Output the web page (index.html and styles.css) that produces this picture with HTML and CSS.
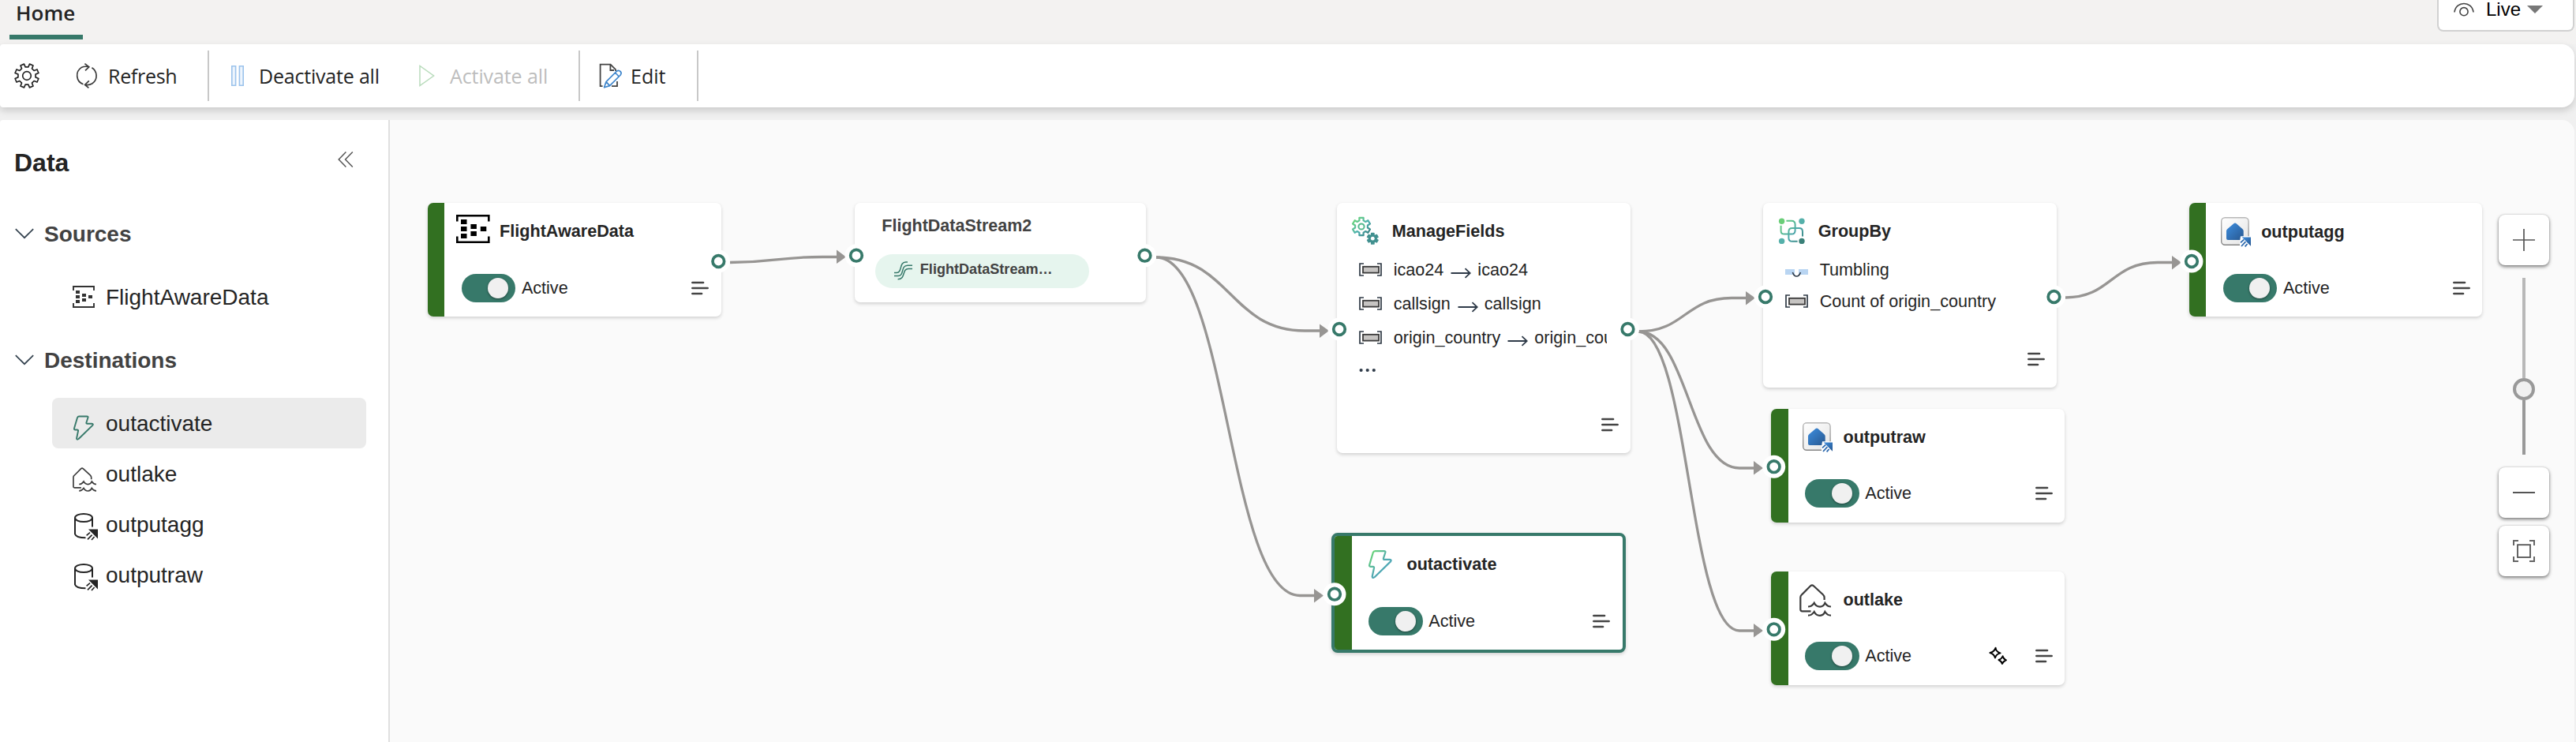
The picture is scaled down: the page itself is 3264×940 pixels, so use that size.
FILE: index.html
```html
<!DOCTYPE html>
<html lang="en">
<head>
<meta charset="utf-8">
<title>Eventstream</title>
<link rel="stylesheet" href="styles.css">
</head>
<body>
<svg class="defs" width="0" height="0" aria-hidden="true">
  <defs>
    <linearGradient id="teal" x1="0" y1="0" x2="1" y2="1"><stop offset="0" stop-color="#6fdc6f"/><stop offset=".55" stop-color="#4fb0b0"/><stop offset="1" stop-color="#347878"/></linearGradient>
    <linearGradient id="tealBox" gradientUnits="userSpaceOnUse" x1="0" y1="0" x2="34" y2="34"><stop offset="0" stop-color="#6fdc6f"/><stop offset=".55" stop-color="#4ba6aa"/><stop offset="1" stop-color="#357870"/></linearGradient>
    <linearGradient id="boltFill" x1="0" y1="0" x2=".8" y2=".8"><stop offset="0" stop-color="#6fdc6f"/><stop offset=".65" stop-color="#4fa8b0"/><stop offset="1" stop-color="#4fa8b8"/></linearGradient>
    <linearGradient id="blue" x1="0" y1="0" x2="1" y2="1"><stop offset="0" stop-color="#3d8ee0"/><stop offset="1" stop-color="#27578f"/></linearGradient>
    <linearGradient id="paper" x1="0" y1="0" x2="1" y2="1"><stop offset="0" stop-color="#fff"/><stop offset="1" stop-color="#e4e4e4"/></linearGradient>
    <linearGradient id="paperEdge" x1="0" y1="0" x2="0" y2="1"><stop offset="0" stop-color="#b8b8b8"/><stop offset="1" stop-color="#858585"/></linearGradient>
    <symbol id="menu" viewBox="0 0 22 18"><path d="M1.4 2H15M1.4 9H20.6M1.4 16H13" fill="none" stroke="#444" stroke-width="2.7" stroke-linecap="round"/></symbol>
    <symbol id="bolt" viewBox="0 0 30 36"><path d="M8.4 1.2H19.8Q21.9 1.2 21.3 3L19 10.2Q18.5 11.9 20.3 11.9H27Q29.6 12.2 28 14.4L7.6 34.2Q5 36 4.7 33.4L7 22.4Q7.2 20.8 5.6 20.8H2.6Q.7 20.6 1.2 18.6L5.8 3Q6.5 1.2 8.4 1.2Z" fill="none" stroke-width="2.2" stroke-linejoin="round"/></symbol>
    <symbol id="lake" viewBox="0 0 40 41"><path d="M14.5 34.3H3.6Q1.3 34.3 1.3 32V16.8Q1.3 15 2.6 13.8L14 2.3Q16 .6 18 2.3L29.6 13Q31.6 15 31.6 16.8V20M11 28.5Q15.5 28.5 18.7 23.8Q21 28.6 26 28.6Q30.6 28.4 32.4 23.8Q35.5 28.5 40 28.5M11 39.7Q15.5 39.7 18.7 35Q21 39.8 26 39.8Q30.6 39.6 32.4 35Q35.5 39.7 40 39.7" fill="none" stroke="#3b3b3b" stroke-width="2.2"/></symbol>
    <symbol id="db" viewBox="0 0 30 35"><g fill="none" stroke="#242424" stroke-width="2"><ellipse cx="12" cy="6" rx="11" ry="5"/><path d="M1 6V26.5Q2.4 31.3 14.5 31.3M23 6V17.5"/><path d="M15.6 28.4L20 24.6M17 33.4L22.6 27.6M22 34L25.6 30" stroke-width="1.7"/></g><path d="M18 20.6H30V32.5Z" fill="#242424"/></symbol>
    <symbol id="house" viewBox="0 0 39 39"><rect x=".7" y=".7" width="34.4" height="34.6" rx="4.5" fill="url(#paper)" stroke="url(#paperEdge)" stroke-width="1.4"/><path d="M7 17.5Q7 16 8.4 14.9L16.3 8.2Q18 7 19.7 8.2L27.3 14.9Q28.7 16 28.7 17.5V27Q28.7 29 26.7 29H9Q7 29 7 27Z" fill="url(#blue)"/><path d="M25 24.2H38.5V38H24V31Z" fill="#fff"/><path d="M26.6 25.4H38V36.8Z" fill="url(#blue)"/><path d="M24.6 33L29.6 28.4M25.6 37L31.6 31M30.4 37.4L33.4 34" stroke="#fff" stroke-width="4"/><path d="M25 32.4L29.4 28.4M26 37L31.4 31.2M30.6 37.4L33.6 34" stroke="#2c69ae" stroke-width="1.8"/></symbol>
    <symbol id="field" viewBox="0 0 29 17"><path d="M6 1H1V16H6M23 1H28V16H23" fill="none" stroke="#2f3a45" stroke-width="1.7"/><rect x="5" y="4.8" width="20" height="7.8" fill="#c6c4c2" stroke="#3a3a3a" stroke-width="1.8"/></symbol>
    <symbol id="arrow" viewBox="0 0 26 14"><path d="M.5 7H24.5M18.5 1.2L24.7 7L18.5 12.8" fill="none" stroke="#2f3b49" stroke-width="1.8"/></symbol>
    <symbol id="chevron" viewBox="0 0 24 14"><path d="M.8 1.2L12 12.2L23.2 1.2" fill="none" stroke="#34424f" stroke-width="1.7"/></symbol>
  </defs>
</svg>

<header class="tabs">
  <div class="tab">Home</div>
  <div class="live">
    <svg class="eye" viewBox="0 0 26 18"><path d="M1 12.5C3 -2.2 23 -2.2 25 12.5" fill="none" stroke="#444" stroke-width="1.6"/><circle cx="13" cy="11.7" r="5.1" fill="none" stroke="#444" stroke-width="1.6"/></svg>
    <span class="live-text">Live</span>
    <svg class="caret" viewBox="0 0 20 10"><path d="M0 0H20L10 10Z" fill="#777"/></svg>
  </div>
</header>

<nav class="toolbar">
  <div class="tool tool-gear">
    <svg width="32" height="32" viewBox="-16 -16 32 32"><path d="M11.05 1.85L14.9 3.5L13 8L9.1 6.5L6.5 9.1L8 13L3.5 14.9L1.85 11.05H-1.85L-3.5 14.9L-8 13L-6.5 9.1L-9.1 6.5L-13 8L-14.9 3.5L-11.05 1.85V-1.85L-14.9 -3.5L-13 -8L-9.1 -6.5L-6.5 -9.1L-8 -13L-3.5 -14.9L-1.85 -11.05H1.85L3.5 -14.9L8 -13L6.5 -9.1L9.1 -6.5L13 -8L14.9 -3.5L11.05 -1.85Z" fill="none" stroke="#242424" stroke-width="1.7" stroke-linejoin="round"/><circle r="5.3" fill="none" stroke="#242424" stroke-width="1.7"/></svg>
  </div>
  <div class="tool tool-refresh">
    <svg width="26" height="32" viewBox="0 0 26 32"><path d="M8.4 26.8A12 12 0 0 1 6 5.6Q10 3.6 15.4 4.6M10.4 .6L15.8 4.8L11 9.4M19.4 5.8A12 12 0 0 1 20 25.8Q16 28.4 11 27.4M15.8 22.4L10.6 27.4L15.4 31.4" fill="none" stroke="#3b3b3b" stroke-width="1.7"/></svg>
    <span>Refresh</span>
  </div>
  <div class="divider"></div>
  <div class="tool tool-deactivate">
    <svg width="16" height="26" viewBox="0 0 16 26"><path d="M.8 .8H5.6V25.2H.8ZM10.4 .8H15.2V25.2H10.4Z" fill="#eef5fd" stroke="#9cc3ec" stroke-width="1.6"/></svg>
    <span>Deactivate all</span>
  </div>
  <div class="tool tool-activate">
    <svg width="20" height="28" viewBox="0 0 20 28"><path d="M1 1.4V26.6L18.6 14Z" fill="none" stroke="#b9dcbc" stroke-width="1.5"/></svg>
    <span>Activate all</span>
  </div>
  <div class="divider"></div>
  <div class="tool tool-edit">
    <svg width="30" height="32" viewBox="0 0 30 32"><path d="M4.6 29.2H1.6V1.6H14.6L21 8V10M14.4 2V9H19M16 29.2H23V23" fill="none" stroke="#444" stroke-width="1.8"/><path d="M6.6 30.8L9 23.6L22.6 10Q25 8.4 27.2 10.6Q29 12.8 27.2 15L13.6 28.6ZM9 23.6L13.6 28.6M20.6 12L25.2 17" fill="#fff" stroke="#3f86cc" stroke-width="1.7" stroke-linejoin="round"/></svg>
    <span>Edit</span>
  </div>
  <div class="divider"></div>
</nav>

<main class="workspace">
  <aside class="sidebar">
    <div class="side-head">
      <h1>Data</h1>
      <svg width="20" height="20" viewBox="0 0 20 20"><path d="M10.4 .6L1.2 10L10.4 19.4M18.8 .6L9.6 10L18.8 19.4" fill="none" stroke="#555" stroke-width="1.5"/></svg>
    </div>
    <div class="group"><svg width="24" height="14"><use href="#chevron"/></svg><span class="label">Sources</span></div>
    <div class="item item-source">
      <span class="item-icon"><svg width="28" height="28" viewBox="0 0 28 28"><path d="M1 6V1H27V6M1 22V27H27V22" fill="none" stroke="#333" stroke-width="1.9"/><path d="M4 6h5v4H4zM4 12h5v4H4zM4 18h5v4H4zM12 10h5v4h-5zM12 16h5v4h-5zM20 12h5v4h-5z" fill="#333"/></svg></span>
      <span class="label">FlightAwareData</span>
    </div>
    <div class="group group-dest"><svg width="24" height="14"><use href="#chevron"/></svg><span class="label">Destinations</span></div>
    <div class="item item-selected"><span class="item-icon icon-bolt"><svg width="26" height="32" stroke="#37796a"><use href="#bolt"/></svg></span><span class="label">outactivate</span></div>
    <div class="item"><span class="item-icon icon-lake"><svg width="30" height="31"><use href="#lake"/></svg></span><span class="label">outlake</span></div>
    <div class="item"><span class="item-icon icon-db"><svg width="30" height="35"><use href="#db"/></svg></span><span class="label">outputagg</span></div>
    <div class="item"><span class="item-icon icon-db"><svg width="30" height="35"><use href="#db"/></svg></span><span class="label">outputraw</span></div>
  </aside>

  <section class="canvas">
    <article class="node node-source">
      <div class="bar"></div>
      <div class="body">
        <div class="node-head"><span class="node-icon"><svg class="stream-src" width="43" height="36" viewBox="0 0 43 36"><path d="M1.3 8.6V1.3H41.3V8.6M1.3 27.4V34.7H41.3V27.4" fill="none" stroke="#000" stroke-width="2.6"/><path d="M6 6h7.5v6H6zM6 15h7.5v6H6zM6 24h7.5v6H6zM18.4 12h7.5v6h-7.5zM18.4 21h7.5v6h-7.5zM30.8 15h7.5v6h-7.5z"/></svg></span><span class="title">FlightAwareData</span></div>
        <div class="node-foot"><span class="toggle"><i></i></span><span class="state">Active</span><svg class="menu" width="22" height="18"><use href="#menu"/></svg></div>
      </div>
    </article>

    <article class="node node-stream">
      <div class="stream-title">FlightDataStream2</div>
      <div class="pill"><svg width="23" height="24" viewBox="0 0 23 24"><path d="M0 14.6H3C10.6 14.6 6 1 14.6 1H17M0 18.6H5C13 18.6 8 5.2 17 5.2H23M4.6 22.8C15 22.8 9.6 9.4 18 9.4H23" fill="none" stroke="#37796a" stroke-width="1.5"/></svg><span>FlightDataStream…</span></div>
    </article>

    <article class="node node-manage">
      <div class="op">
        <div class="op-head"><svg width="36" height="38" viewBox="-13 -13 36 38"><path d="M2.6 7.6L2.6 11.2H-2.6L-2.6 7.6L-5.3 6L-8.4 7.8L-11 3.4L-7.9 1.5V-1.5L-11 -3.4L-8.4 -7.8L-5.3 -6L-2.6 -7.6V-11.2H2.6V-7.6L5.3 -6L8.4 -7.8L11 -3.4L7.9 -1.5V1.5L11 3.4L8.4 7.8L5.3 6Z" fill="none" stroke="url(#teal)" stroke-width="2.2" stroke-linejoin="round"/><circle r="3.6" fill="none" stroke="#52b88c" stroke-width="2"/><g transform="translate(14.3 15.2) scale(.6)"><path d="M2.6 7.6L2.6 11.2H-2.6L-2.6 7.6L-5.3 6L-8.4 7.8L-11 3.4L-7.9 1.5V-1.5L-11 -3.4L-8.4 -7.8L-5.3 -6L-2.6 -7.6V-11.2H2.6V-7.6L5.3 -6L8.4 -7.8L11 -3.4L7.9 -1.5V1.5L11 3.4L8.4 7.8L5.3 6Z" fill="#41908f" stroke="#41908f" stroke-width="2.8" stroke-linejoin="round"/><circle r="4" fill="#fff"/></g></svg><span class="title">ManageFields</span></div>
        <div class="field"><svg width="29" height="17"><use href="#field"/></svg><span>icao24</span><svg class="arrow" width="26" height="14"><use href="#arrow"/></svg><span>icao24</span></div>
        <div class="field"><svg width="29" height="17"><use href="#field"/></svg><span>callsign</span><svg class="arrow" width="26" height="14"><use href="#arrow"/></svg><span>callsign</span></div>
        <div class="field"><svg width="29" height="17"><use href="#field"/></svg><span>origin_country</span><svg class="arrow" width="26" height="14"><use href="#arrow"/></svg><span>origin_country</span></div>
        <svg class="dots" width="22" height="6" viewBox="0 0 22 6" fill="#2f3b49"><circle cx="2.6" cy="3" r="2.1"/><circle cx="10.7" cy="3" r="2.1"/><circle cx="18.8" cy="3" r="2.1"/></svg>
        <svg class="menu op-menu" width="22" height="18"><use href="#menu"/></svg>
      </div>
    </article>

    <article class="node node-group">
      <div class="op">
        <div class="op-head"><svg width="36" height="38" viewBox="-2 -2.4 36 38"><g fill="none" stroke="url(#tealBox)" stroke-width="2"><path d="M9.4 3.4H16Q20.6 3.4 20.6 8V15.6Q20.6 20.2 16 20.2H7Q2.6 20.2 2.6 16V9.4"/><path d="M30 23V17Q30 12.6 25.6 12.6H17Q12.4 12.6 12.4 17V25Q12.4 29.4 17 29.4H23.6"/></g><circle cx="3.6" cy="3.8" r="3.7" fill="#6ace78"/><circle cx="29" cy="3.8" r="3.7" fill="#55b0aa"/><circle cx="3.6" cy="29" r="3.7" fill="#55b0aa"/><circle cx="29" cy="29" r="3.7" fill="#3a8078"/></svg><span class="title">GroupBy</span></div>
        <div class="field window"><svg class="window-icon" width="29" height="17" viewBox="0 0 29 17"><path d="M0 4H12V11H0ZM17 4H29V11H17Z" fill="#b9d5f2"/><path d="M9.4 8Q11 13 14.4 13Q17.8 13 19.4 8" fill="none" stroke="#2f3b49" stroke-width="1.6"/></svg><span>Tumbling</span></div>
        <div class="field count"><svg width="29" height="17"><use href="#field"/></svg><span>Count of origin_country</span></div>
        <svg class="menu op-menu" width="22" height="18"><use href="#menu"/></svg>
      </div>
    </article>

    <article class="node node-agg">
      <div class="bar"></div>
      <div class="body">
        <div class="node-head"><span class="node-icon"><svg class="house" width="39" height="39"><use href="#house"/></svg></span><span class="title">outputagg</span></div>
        <div class="node-foot"><span class="toggle"><i></i></span><span class="state">Active</span><svg class="menu" width="22" height="18"><use href="#menu"/></svg></div>
      </div>
    </article>

    <article class="node node-raw">
      <div class="bar"></div>
      <div class="body">
        <div class="node-head"><span class="node-icon"><svg class="house" width="39" height="39"><use href="#house"/></svg></span><span class="title">outputraw</span></div>
        <div class="node-foot"><span class="toggle"><i></i></span><span class="state">Active</span><svg class="menu" width="22" height="18"><use href="#menu"/></svg></div>
      </div>
    </article>

    <article class="node node-lake">
      <div class="bar"></div>
      <div class="body">
        <div class="node-head"><span class="node-icon"><svg class="lake" width="40" height="41"><use href="#lake"/></svg></span><span class="title">outlake</span></div>
        <div class="node-foot"><span class="toggle"><i></i></span><span class="state">Active</span><svg class="sparkle" width="24" height="24" viewBox="0 0 24 24"><path d="M8.6 1.6Q9 6.6 14.6 8.4Q9.4 9.6 8 14.4Q6.6 9.4 1.4 8Q7 6.6 8.6 1.6ZM17.6 12.2Q18.4 15.6 22 17.4Q18.4 18.4 17 22Q16 18.4 12.4 17Q16.4 15.6 17.6 12.2Z" fill="none" stroke="#000" stroke-width="1.9" stroke-linejoin="round"/></svg><svg class="menu" width="22" height="18"><use href="#menu"/></svg></div>
      </div>
    </article>

    <article class="node node-active selected">
      <div class="bar"></div>
      <div class="body">
        <div class="node-head"><span class="node-icon"><svg width="30" height="36" stroke="url(#boltFill)"><use href="#bolt"/></svg></span><span class="title">outactivate</span></div>
        <div class="node-foot"><span class="toggle"><i></i></span><span class="state">Active</span><svg class="menu" width="22" height="18"><use href="#menu"/></svg></div>
      </div>
    </article>

    <svg class="edges" viewBox="494 152 2768 788">
      <g fill="none" stroke="#979593" stroke-width="3.3">
        <path d="M925 332.5C984 332.5 984 325.5 1042 325.5H1061"/>
        <path d="M1465 326C1559 326 1559 419 1653 419H1673"/>
        <path d="M1465 326C1556 326 1556 754.5 1647 754.5H1666"/>
        <path d="M2076 420C2135 420 2135 377.5 2194 377.5H2213"/>
        <path d="M2076 420C2140 420 2140 593 2204 593H2223"/>
        <path d="M2076 420C2140 420 2140 799 2204 799H2223"/>
        <path d="M2617 377C2675 377 2675 332.5 2734 332.5H2753"/>
      </g>
      <g fill="#979593">
        <path d="M1060 316.5V334L1072 325.5Z"/><path d="M1672 410.5V428L1684 419Z"/><path d="M1665 746V763.5L1677 754.5Z"/>
        <path d="M2212 369V386.5L2224 377.5Z"/><path d="M2222 584V601.5L2234 593Z"/><path d="M2222 790V807.5L2234 799Z"/><path d="M2752 324V341.5L2764 332.5Z"/>
      </g>
      <g fill="#fff">
        <circle cx="910.3" cy="331" r="14.5"/><circle cx="1085" cy="323.7" r="14.5"/><circle cx="1450.5" cy="323.7" r="14.5"/><circle cx="1697" cy="417" r="14.5"/><circle cx="2062.5" cy="417" r="14.5"/><circle cx="1691" cy="752.7" r="14.5"/><circle cx="2237" cy="376" r="14.5"/><circle cx="2602.5" cy="376" r="14.5"/><circle cx="2247.7" cy="591.2" r="14.5"/><circle cx="2247.7" cy="797.3" r="14.5"/><circle cx="2777" cy="331" r="14.5"/>
      </g>
      <g fill="#fff" stroke="#37796a" stroke-width="3.7">
        <circle cx="910.3" cy="331" r="7.3"/><circle cx="1085" cy="323.7" r="7.3"/><circle cx="1450.5" cy="323.7" r="7.3"/><circle cx="1697" cy="417" r="7.3"/><circle cx="2062.5" cy="417" r="7.3"/><circle cx="1691" cy="752.7" r="7.3"/><circle cx="2237" cy="376" r="7.3"/><circle cx="2602.5" cy="376" r="7.3"/><circle cx="2247.7" cy="591.2" r="7.3"/><circle cx="2247.7" cy="797.3" r="7.3"/><circle cx="2777" cy="331" r="7.3"/>
      </g>
    </svg>

    <div class="zoom">
      <button class="zoom-btn"><svg width="28" height="28" viewBox="0 0 28 28"><path d="M0 14H28M14 0V28" stroke="#555" stroke-width="1.7"/></svg></button>
      <div class="track"><i class="upper"></i><i class="thumb"></i><i class="lower"></i></div>
      <button class="zoom-btn"><svg width="28" height="28" viewBox="0 0 28 28"><path d="M0 14H28" stroke="#555" stroke-width="2"/></svg></button>
      <button class="zoom-btn"><svg width="28" height="30" viewBox="0 0 28 30"><path d="M1 8V2H7M21 2H27V8M1 22V28H7M21 28H27V22" fill="none" stroke="#666" stroke-width="2"/><rect x="6" y="7.2" width="16" height="15.8" fill="none" stroke="#555" stroke-width="1.8"/></svg></button>
    </div>
  </section>
</main>
</body>
</html>
```
FILE: styles.css
```css
* { box-sizing: border-box; }

body {
  margin: 0;
  width: 3264px;
  height: 940px;
  overflow: hidden;
  display: flex;
  flex-direction: column;
  background: #f0f0f0;
  color: #242424;
  font-family: "Liberation Sans", Arial, sans-serif;
}

svg { display: block; flex: none; overflow: visible; }
.defs { position: absolute; }
h1 { margin: 0; }

/* Tab strip */
.tabs {
  flex: none;
  height: 56px;
  display: flex;
  justify-content: space-between;
  align-items: flex-start;
  background: #f3f2f1;
  padding: 0 2px 0 12px;
}
.tab {
  width: 93px;
  height: 50px;
  padding-left: 8px;
  border-bottom: 6px solid #37796a;
  font: 600 26px/33px "Open Sans", "Noto Sans", sans-serif;
}
.live {
  width: 174px;
  height: 40px;
  display: flex;
  align-items: flex-start;
  padding-left: 19px;
  background: #fff;
  border: 2px solid #d1d1d1;
  border-top: 0;
  border-radius: 0 0 8px 8px;
}
.eye { width: 26px; height: 18px; margin-top: 3px; }
.live-text { width: 51px; margin-left: 15px; font-size: 24px; line-height: 24px; color: #000; }
.caret { width: 20px; height: 10px; margin-top: 7px; margin-left: 1px; }

/* Command bar */
.toolbar {
  flex: none;
  height: 80px;
  width: 3262px;
  display: flex;
  align-items: center;
  background: #fff;
  border-radius: 4px 16px 16px 4px;
  box-shadow: 0 4px 10px rgba(0, 0, 0, .16);
  font: 25px/34px "Open Sans", "Noto Sans", sans-serif;
  white-space: nowrap;
  z-index: 1;
}
.tool { display: flex; align-items: center; height: 80px; }
.divider { width: 2px; height: 64px; background: #c8c8c8; }
.tool-gear { width: 97px; padding-left: 18px; }
.tool-refresh { width: 166px; gap: 14px; letter-spacing: -.3px; }
.tool-deactivate { width: 266px; padding-left: 28px; gap: 19px; letter-spacing: -.2px; }
.tool-activate { width: 202px; gap: 19px; color: #bdbdbd; letter-spacing: -.1px; }
.tool-edit { width: 148px; padding-left: 24px; gap: 10px; }

/* Workspace */
.workspace { flex: none; display: flex; height: 788px; margin-top: 16px; }
.sidebar {
  width: 494px;
  background: #fff;
  border-right: 2px solid #e0e0e0;
  border-top-left-radius: 4px;
  font-size: 28px;
  padding-top: 22px;
}
.side-head { display: flex; justify-content: space-between; align-items: center; height: 64px; padding: 0 44px 0 18px; }
.side-head h1 { font-size: 32px; line-height: 64px; }
.side-head svg { margin-bottom: 8px; }
.label { padding-top: 2px; }
.group {
  display: flex;
  align-items: center;
  gap: 13px;
  height: 64px;
  margin-top: 26px;
  padding-left: 19px;
  font-weight: bold;
  color: #424242;
}
.group-dest { margin-top: 16px; }
.item {
  display: flex;
  align-items: center;
  height: 64px;
  width: 398px;
  margin-left: 66px;
  padding-left: 26px;
  border-radius: 8px;
}
.item-source { margin-top: 16px; }
.group-dest + .item { margin-top: 16px; }
.item-selected { background: #ebebeb; }
.item-icon { width: 42px; }
.icon-bolt { padding: 12px 0 0 1px; }
.icon-lake { padding-top: 14px; }
.icon-db { padding: 7px 0 0 2px; }

/* Diagram */
.canvas {
  position: relative;
  width: 2768px;
  background: #fafafa;
  border-top-right-radius: 16px;
  overflow: hidden;
  font-size: 21.6px;
}
.edges { position: absolute; inset: 0; width: 2768px; height: 788px; }
.node {
  position: absolute;
  display: flex;
  width: 372.4px;
  height: 144px;
  background: #fff;
  border-radius: 7px;
  box-shadow: 0 2px 4px rgba(0, 0, 0, .17);
}
.node-source { left: 47.6px; top: 105px; }
.node-stream { left: 588.8px; top: 105.3px; width: 369.3px; height: 125.7px; flex-direction: column; }
.node-manage { left: 1199.7px; top: 105.3px; height: 316.7px; }
.node-active { left: 1193px; top: 523px; width: 373px; height: 152px; }
.node-group { left: 1739.7px; top: 105.3px; height: 233.7px; }
.node-agg { left: 2279.7px; top: 105.3px; width: 371.5px; }
.node-raw { left: 1750px; top: 365.6px; }
.node-lake { left: 1750px; top: 571.7px; }
.selected { border: 4px solid #37796a; border-radius: 8px; }

.bar { width: 21.6px; background: #327021; border-radius: 7px 0 0 7px; }
.selected .bar { border-radius: 4px 0 0 4px; }
.body { flex: 1; display: flex; flex-direction: column; }
.node-head { display: flex; align-items: center; height: 71.5px; padding-left: 14.4px; gap: 11.5px; }
.node-icon { width: 44px; height: 44px; display: flex; align-items: center; justify-content: center; }
.stream-src { margin-bottom: 5px; }
.house { margin: 2px 0 0 3px; }
.lake { margin: 3px 3px 0 0; }
.title { font-weight: bold; line-height: 26px; padding-top: 1px; }
.node-foot { display: flex; align-items: center; height: 72.5px; padding: 0 15.5px 0 21.6px; }
.selected .node-foot { padding-right: 16px; }
.toggle {
  width: 68.5px;
  height: 36px;
  border-radius: 18px;
  background: #37796a;
  padding: 5px 9px;
  display: flex;
  justify-content: flex-end;
}
.toggle i { width: 26px; height: 26px; border-radius: 50%; background: #f0f0f0; box-shadow: 0 1px 3px rgba(0, 0, 0, .45); }
.state { margin-left: 7.6px; }
.menu { margin-left: auto; }
.sparkle { margin-left: auto; }
.sparkle + .menu { margin-left: 35px; }

.stream-title { padding: 15.5px 0 0 34.5px; font-weight: bold; line-height: 26px; font-size: 21.5px; color: #424242; }
.pill {
  display: flex;
  align-items: center;
  gap: 9.5px;
  width: 271.5px;
  height: 43px;
  margin: 23.1px 0 0 26px;
  padding-left: 24.5px;
  border-radius: 22px;
  background: #e6f5ee;
  color: #424242;
  font-size: 18.1px;
  font-weight: bold;
}
.pill span { margin-bottom: 4px; }

.op { flex: 1; display: flex; flex-direction: column; padding: 0 15.5px 0 18px; }
.op-head { display: flex; align-items: center; gap: 16px; height: 63px; padding-top: 8px; }
.field {
  display: flex;
  align-items: center;
  height: 43px;
  width: 324px;
  padding-left: 10.5px;
  overflow: hidden;
  white-space: nowrap;
}
.field span { margin-left: 14.5px; }
.field .arrow { margin: 9px 0 0 9px; }
.field .arrow + span { margin-left: 8px; }
.window { height: 40px; margin-top: 1.5px; }
.window-icon { margin-top: 8px; }
.count { height: 40px; }
.dots { margin: 16.5px 0 0 10.5px; }
.op-menu { margin: auto 0 27px auto; }

/* Zoom controls */
.zoom {
  position: absolute;
  left: 2671.5px;
  top: 120px;
  display: flex;
  flex-direction: column;
  align-items: center;
  width: 64px;
}
.zoom-btn {
  width: 64px;
  height: 64px;
  padding: 0;
  border: 0;
  border-radius: 8px;
  background: #fff;
  display: flex;
  align-items: center;
  justify-content: center;
  box-shadow: 0 2px 4px rgba(0, 0, 0, .5), 0 0 2px rgba(0, 0, 0, .2);
}
.zoom-btn + .zoom-btn { margin-top: 10px; }
.track { display: flex; flex-direction: column; align-items: center; height: 224px; margin: 16px 0; }
.upper { width: 4px; height: 127px; background: #b8b8b8; }
.thumb { width: 28px; height: 28px; border: 4px solid #999; border-radius: 50%; background: #f0f0f0; }
.lower { width: 4px; flex: 1; background: #999; }
```
